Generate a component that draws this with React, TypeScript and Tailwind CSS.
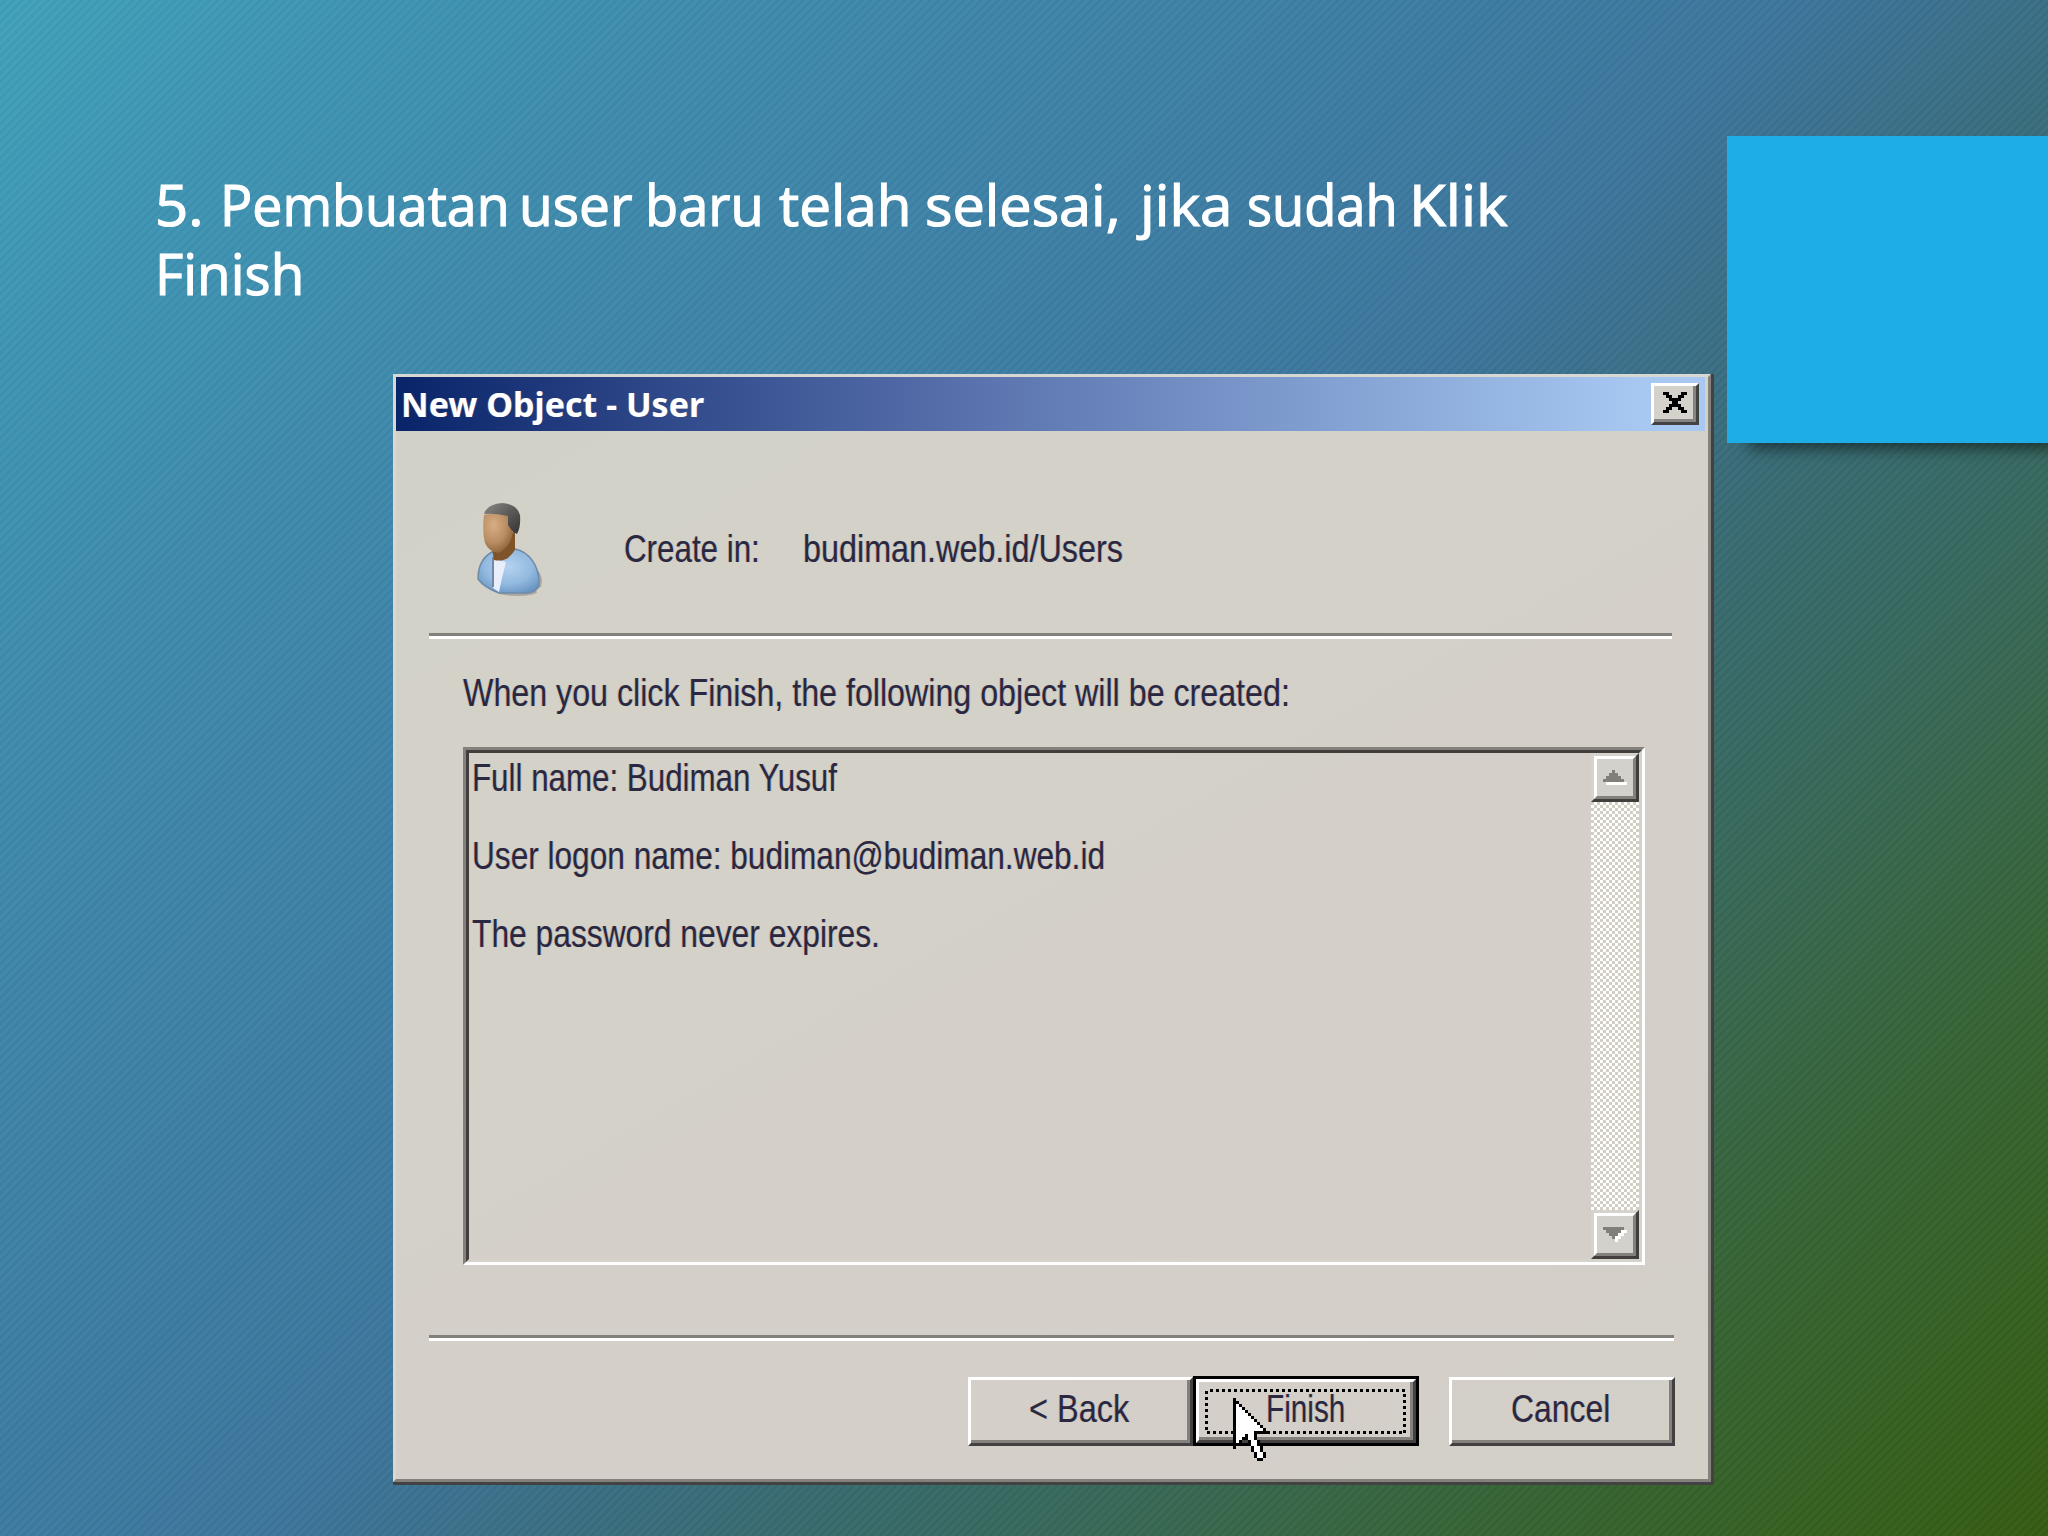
import { useLayoutEffect, useRef, useState } from "react";
import type { ReactNode } from "react";

/* One line of text, condensed or stretched to an exact width. */
function Fit({ width, gap = 0, className = "", children }: { width: number; gap?: number; className?: string; children: ReactNode }) {
  const ref = useRef<HTMLSpanElement>(null);
  const [scale, setScale] = useState(1);
  useLayoutEffect(() => {
    if (ref.current) setScale(width / ref.current.offsetWidth);
  }, [width]);
  return (
    <span className={"block whitespace-nowrap " + className} style={gap ? { width, marginLeft: gap } : { width }}>
      <span ref={ref} className="inline-block origin-left" style={{ transform: `scaleX(${scale})` }}>
        {children}
      </span>
    </span>
  );
}

/* Heading words with their left edges and widths, measured from the slide's left side. */
const HEADING = [
  { text: "5.", x: 155, width: 49 },
  { text: "Pembuatan", x: 220, width: 290 },
  { text: "user", x: 519, width: 113 },
  { text: "baru", x: 645, width: 119 },
  { text: "telah", x: 779, width: 132 },
  { text: "selesai,", x: 925, width: 196 },
  { text: "jika", x: 1140, width: 92 },
  { text: "sudah", x: 1247, width: 151 },
  { text: "Klik", x: 1409, width: 99 },
];

const CURSOR = [
  "X",
  "XX",
  "X.X",
  "X..X",
  "X...X",
  "X....X",
  "X.....X",
  "X......X",
  "X.......X",
  "X........X",
  "X.........X",
  "X......XXXXX",
  "X...X..X",
  "X..XX..X",
  "X.X  X..X",
  "XX   X..X",
  "X     X..X",
  "      X..X",
  "       X..X",
  "       X..X",
  "        XX",
];

const CLOSE = ["XX    XX", " XX  XX", "  XXXX", "   XX", "  XXXX", " XX  XX", "XX    XX"];
const UP = ["   g", "  ggg", " ggggg", "ggggggg", " wwwwwww"];
const DOWN = ["ggggggg", " gggggww", "  gggww", "   gww", "    w"];

const FILLS: Record<string, string> = { X: "#000", ".": "#fff", g: "#827f7a", w: "#fffffb" };

function Pixels({ rows, cols, className = "" }: { rows: string[]; cols: number; className?: string }) {
  return (
    <svg
      className={className}
      width={cols * 3}
      height={rows.length * 3}
      viewBox={`0 0 ${cols} ${rows.length}`}
      shapeRendering="crispEdges"
    >
      {rows.flatMap((row, y) =>
        [...row].map((c, x) => (c === " " ? null : <rect key={`${x}-${y}`} x={x} y={y} width={1} height={1} fill={FILLS[c]} />)),
      )}
    </svg>
  );
}

function UserIcon() {
  return (
    <svg width="68" height="96" viewBox="0 0 68 96">
      <defs>
        <radialGradient id="face" cx="0.35" cy="0.3" r="0.8">
          <stop offset="0" stopColor="#d8ae86" />
          <stop offset="0.55" stopColor="#b98d63" />
          <stop offset="1" stopColor="#85592e" />
        </radialGradient>
        <radialGradient id="shirt" cx="0.5" cy="0.4" r="0.65">
          <stop offset="0" stopColor="#b4d2f0" />
          <stop offset="0.6" stopColor="#93badf" />
          <stop offset="1" stopColor="#6a95c4" />
        </radialGradient>
        <linearGradient id="hair" x1="0" y1="0" x2="1" y2="1">
          <stop offset="0" stopColor="#8b8985" />
          <stop offset="0.5" stopColor="#5c5b59" />
          <stop offset="1" stopColor="#343332" />
        </linearGradient>
      </defs>
      <ellipse cx="40" cy="89" rx="20" ry="4" fill="#8d8c86" opacity="0.6" />
      <path d="M60 66q7 8 4 18l-8 4z" fill="#8d8c86" opacity="0.6" />
      <path d="M15 49C6 54 1 64 1 76C6 83 14 87 22 90H50C58 89 62 86 62 80C62 62 52 49 38 46Z" fill="url(#shirt)" stroke="#6f8aa8" strokeWidth="1.5" />
      <path d="M17 56L29 59Q25 74 22 89L16 85Z" fill="#e9eefa" />
      <path d="M16 54V84" stroke="#7288a6" strokeWidth="2" />
      <path d="M15 46L38 27L38 47Q30 60 17 57Z" fill="#80542a" />
      <path d="M7 12Q20 8 33 12V24L36 30Q34 43 22 50Q12 49 8 40Q5 28 7 12Z" fill="url(#face)" />
      <path d="M7 11Q10 1 25 0Q40 1 43 12Q44 24 40 31L35 28L31 22V13Q18 10 7 11Z" fill="url(#hair)" />
    </svg>
  );
}

function Separator({ className = "" }: { className?: string }) {
  return <div className={"ml-[33px] h-[6px] shrink-0 border-b-[3px] border-t-[3px] border-b-white border-t-[#82807b] " + className} />;
}

function Button({ children, className = "" }: { children: ReactNode; className?: string }) {
  return (
    <div className={"h-[69px] border-b-[3px] border-l-[3px] border-r-[3px] border-t-[3px] border-b-[#424040] border-l-white border-r-[#424040] border-t-white " + className}>
      <div className="flex h-full justify-center border-b-[3px] border-r-[3px] border-[#84807c] pt-[10px]">{children}</div>
    </div>
  );
}

function ScrollButton({ rows }: { rows: string[] }) {
  return (
    <div className="h-[49px] w-[48px] shrink-0 border-[3px] border-b-[#413e3b] border-l-[#d6d3cc] border-r-[#413e3b] border-t-[#d6d3cc]">
      <div className="flex h-full items-center justify-center border-[3px] border-b-[#84817c] border-l-white border-r-[#84817c] border-t-white bg-[#d2d1cb]">
        <Pixels rows={rows} cols={8} />
      </div>
    </div>
  );
}

export default function App() {
  return (
    <div className="relative h-[1536px] w-[2048px] overflow-hidden bg-[linear-gradient(135deg,#3ea0b8_0%,#3d96b4_8%,#3d8aac_20%,#3c7fa5_35%,#3b749b_50%,#386c7e_59%,#36696c_65%,#366756_73%,#356338_82%,#345f20_92%,#335a10_100%)]">
      <div className="absolute inset-0 bg-[repeating-linear-gradient(135deg,rgba(255,255,255,0.03)_0px,rgba(255,255,255,0.03)_2px,rgba(0,20,40,0.04)_4px,rgba(255,255,255,0.03)_6px)]" />
      <div className="relative">
        <div className="flex h-[443px] justify-between">
          <h1 className="pt-[170px] font-['Open_Sans','Noto_Sans',sans-serif] text-[57px] leading-[68.5px] text-white [-webkit-text-stroke:1.2px_white]">
            <span className="flex">
              {HEADING.map((word, i) => {
                const prev = HEADING[i - 1];
                return (
                  <Fit key={word.text} width={word.width} gap={word.x - (prev ? prev.x + prev.width : 0)}>
                    {word.text}{" "}
                  </Fit>
                );
              })}
            </span>
            <Fit width={149} gap={155}>Finish</Fit>
          </h1>
          <div className="mt-[136px] h-[307px] w-[321px] bg-[#1eade6] shadow-[16px_12px_14px_-6px_rgba(0,0,0,0.5)]" />
        </div>

        <div className="relative -mt-[69px] ml-[393px] h-[1111px] w-[1321px] border-b-[3px] border-r-[3px] border-[#424242] bg-[#d4d0c8] font-['Liberation_Sans',Arial,sans-serif] text-[38px] leading-[39px] text-[#2a2740] [text-shadow:-1px_0_0_rgba(200,130,60,0.3),1px_0_0_rgba(60,120,190,0.3)]">
          <div className="flex h-full flex-col border-b-[3px] border-l-[3px] border-r-[3px] border-t-[3px] border-b-[#84817c] border-l-[#d9d7d2] border-r-[#84817c] border-t-[#d9d7d2] bg-[linear-gradient(150deg,#d2d1c7_0%,#d4d1c9_40%,#d4cfc9_70%,#d3d0c8_100%)]">
            <div className="mr-[3px] flex h-[54px] shrink-0 justify-between bg-[linear-gradient(90deg,#0a246a_0%,#5b74af_45%,#a6c8f1_95%)] pl-[5px] pr-[6px] pt-[6px] font-['Noto_Sans','Open_Sans',sans-serif] text-[34px] font-bold text-white">
              <Fit width={303} className="mt-[2px]">New Object - User</Fit>
              <div className="h-[42px] w-[48px] border-b-[3px] border-l-[3px] border-r-[3px] border-t-[3px] border-b-[#424242] border-l-white border-r-[#424242] border-t-white">
                <div className="h-full border-b-[3px] border-r-[3px] border-[#848484] bg-[#d4d2ca] pl-[9px] pt-[6px]">
                  <Pixels rows={CLOSE} cols={8} />
                </div>
              </div>
            </div>

            <div className="flex h-[202px] shrink-0 pl-[81px] pt-[72px]">
              <UserIcon />
              <Fit width={136} className="ml-[79px] mt-[27px]">Create in:</Fit>
              <Fit width={320} className="ml-[43px] mt-[27px]">budiman.web.id/Users</Fit>
            </div>
            <Separator className="w-[1243px]" />

            <Fit width={827} className="ml-[67px] mt-[35px]">When you click Finish, the following object will be created:</Fit>

            <div className="ml-[67px] mt-[34px] h-[518px] w-[1182px] shrink-0 border-[3px] border-b-white border-l-[#84817c] border-r-white border-t-[#84817c]">
              <div className="flex h-full justify-between border-[3px] border-b-[#d6d3cc] border-l-[#413e3b] border-r-[#d6d3cc] border-t-[#413e3b]">
                <div className="flex flex-col gap-[39px] pl-[3px] pt-[6px]">
                  <Fit width={365}>Full name: Budiman Yusuf</Fit>
                  <Fit width={633}>User logon name: budiman@budiman.web.id</Fit>
                  <Fit width={408}>The password never expires.</Fit>
                </div>
                <div className="flex h-full w-[48px] flex-col justify-between">
                  <ScrollButton rows={UP} />
                  <div className="w-full grow bg-[conic-gradient(#fffffb_25%,#d2cec6_0_50%,#fffffb_0_75%,#d2cec6_0)] bg-[length:6px_6px]" />
                  <ScrollButton rows={DOWN} />
                </div>
              </div>
            </div>

            <Separator className="mt-[70px] w-[1245px]" />

            <div className="mt-[36px] flex pl-[572px]">
              <Button className="w-[225px]">
                <Fit width={100}>&lt; Back</Fit>
              </Button>
              <div className="relative -mt-px h-[70px] w-[226px] border-[3px] border-black">
                <div className="h-full border-[3px] border-b-[#424040] border-l-white border-r-[#424040] border-t-white">
                  <div className="h-full border-b-[3px] border-r-[3px] border-[#84807c] pl-[67px] pt-[8px]">
                    <Fit width={79}>Finish</Fit>
                  </div>
                </div>
                <svg className="absolute left-[9px] top-[10px]" width="202" height="46" shapeRendering="crispEdges">
                  <rect x="1.5" y="1.5" width="198" height="42" fill="none" stroke="#000" strokeWidth="3" strokeDasharray="3 3" strokeDashoffset="-3" />
                </svg>
                <Pixels rows={CURSOR} cols={12} className="absolute left-[37px] top-[19px]" />
              </div>
              <Button className="ml-[30px] w-[226px]">
                <Fit width={99}>Cancel</Fit>
              </Button>
            </div>
          </div>
        </div>
      </div>
    </div>
  );
}
